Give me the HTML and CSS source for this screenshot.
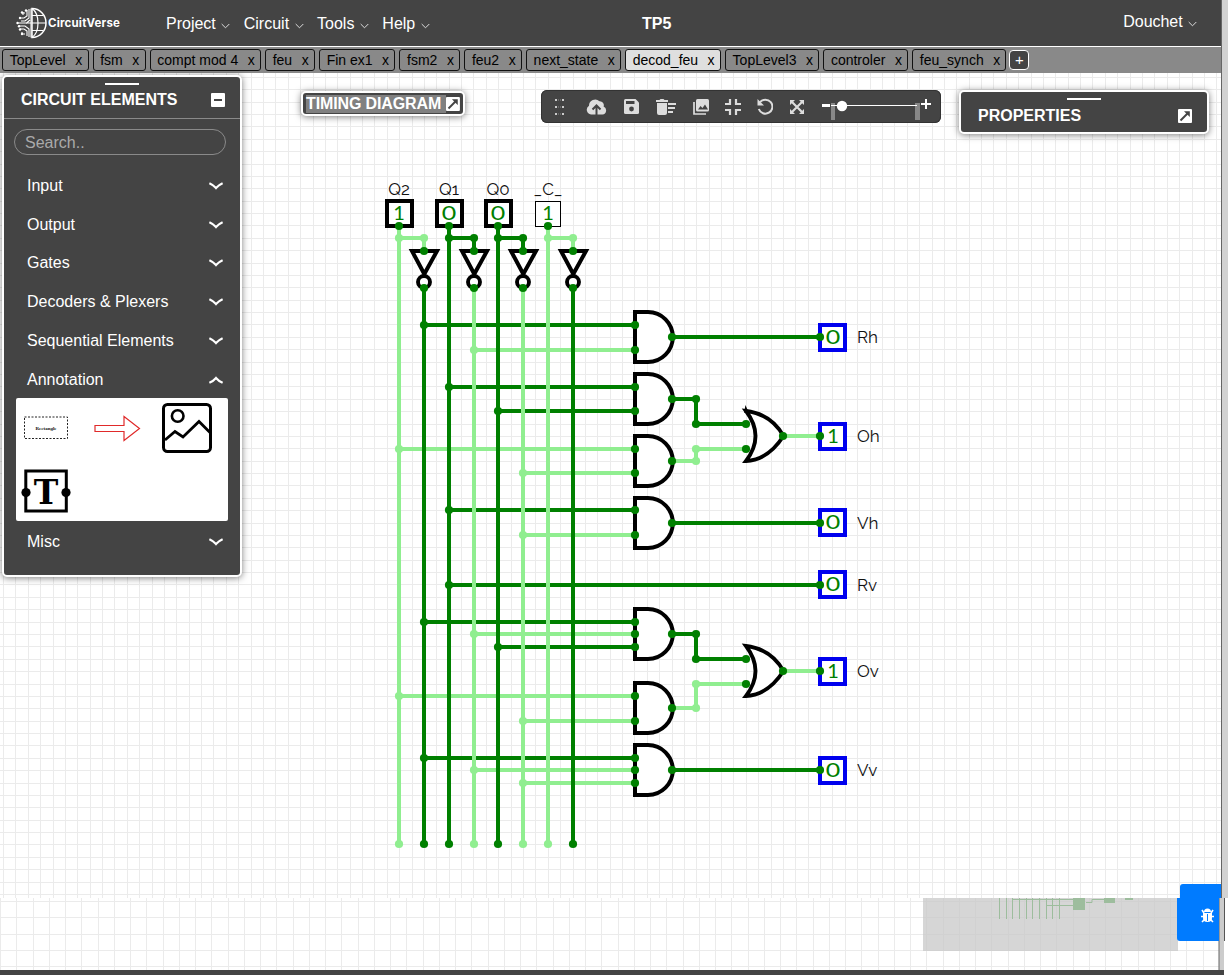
FILE: index.html
```html
<!DOCTYPE html>
<html lang="fr">
<head>
<meta charset="utf-8">
<title>TP5 - CircuitVerse</title>
<link rel="stylesheet" href="styles.css">
</head>
<body>
<svg class="defs" width="0" height="0">
  <symbol id="popout" viewBox="0 0 14 14"><path d="M0 1Q0 0 1 0H13Q14 0 14 1V13Q14 14 13 14H1Q0 14 0 13Z" fill="#fff"/><path d="M2.500 11.500 10 4" stroke="#444" stroke-width="1.900"/><path d="M6 2.200H11.800V8Z" fill="#444"/></symbol>
  <symbol id="chev" viewBox="0 0 9 6"><path d="M.7 1 4.5 4.8 8.3 1" fill="none" stroke="#ddd" stroke-width="1"/></symbol>
  <symbol id="arrow" viewBox="0 0 14 8"><path d="M.4 1.200Q4.500 3 7 6Q9.500 3 13.600 1.200" fill="none" stroke="#fff" stroke-width="2.100"/></symbol>
</svg>

<main class="app">
  <header class="navbar">
    <div class="brand">
      <svg width="32" height="32" viewBox="0 0 32 32" fill="none" stroke="#fff">
        <path d="M16 1.500A14 14.500 0 0 1 16 30.500Z" stroke-width="1.500"/>
        <path d="M16 1.500C24 7 24 25 16 30.500M16 8.500H27M16 16H30M16 23.500H27" stroke-width="1.200"/>
        <path d="M15 1.500V30.500M13 2V11L9 14H5M13 30V22L9 19H3M11 3V9L8 11H4M11 29V24L8 22H4M9 6H6M9 27H6M15 16H1M7 5V8M6 25V28M14 13 10 16.500" stroke-width="1.100"/>
        <g fill="#fff" stroke="none"><circle cx="4" cy="11" r="1.200"/><circle cx="1.500" cy="16" r="1.200"/><circle cx="3" cy="19.300" r="1.200"/><circle cx="4" cy="22.500" r="1.200"/><circle cx="6" cy="27" r="1.200"/><circle cx="6" cy="5.500" r="1.200"/><circle cx="10" cy="3.500" r="1.200"/></g>
      </svg>
      <span>CircuitVerse</span>
    </div>
    <nav class="menu">
      <a>Project <svg width="9" height="6"><use href="#chev"/></svg></a>
      <a>Circuit <svg width="9" height="6"><use href="#chev"/></svg></a>
      <a>Tools <svg width="9" height="6"><use href="#chev"/></svg></a>
      <a>Help <svg width="9" height="6"><use href="#chev"/></svg></a>
    </nav>
    <div class="title">TP5</div>
    <a class="user">Douchet <svg width="9" height="6"><use href="#chev"/></svg></a>
  </header>

  <div class="tabs">
    <div class="tab">TopLevel<span>x</span></div>
    <div class="tab">fsm<span>x</span></div>
    <div class="tab">compt mod 4<span>x</span></div>
    <div class="tab">feu<span>x</span></div>
    <div class="tab">Fin ex1<span>x</span></div>
    <div class="tab">fsm2<span>x</span></div>
    <div class="tab">feu2<span>x</span></div>
    <div class="tab">next_state<span>x</span></div>
    <div class="tab current">decod_feu<span>x</span></div>
    <div class="tab">TopLevel3<span>x</span></div>
    <div class="tab">controler<span>x</span></div>
    <div class="tab">feu_synch<span>x</span></div>
    <button class="add">+</button>
  </div>
</main>

<svg class="board" id="board" width="1228" height="975"></svg>

<section class="panel elements">
  <div class="grip"></div>
  <h2 class="head">CIRCUIT ELEMENTS <svg width="14" height="14"><rect width="14" height="14" rx="1" fill="#fff"/><path d="M3 7H11" stroke="#444" stroke-width="2"/></svg></h2>
  <div class="search">Search..</div>
  <ul class="groups">
    <li>Input <svg width="14" height="8"><use href="#arrow"/></svg></li>
    <li>Output <svg width="14" height="8"><use href="#arrow"/></svg></li>
    <li>Gates <svg width="14" height="8"><use href="#arrow"/></svg></li>
    <li>Decoders &amp; Plexers <svg width="14" height="8"><use href="#arrow"/></svg></li>
    <li>Sequential Elements <svg width="14" height="8"><use href="#arrow"/></svg></li>
    <li class="open">Annotation <svg width="14" height="8"><use href="#arrow"/></svg></li>
  </ul>
  <div class="icons">
    <svg width="212" height="123" viewBox="16 398 212 123" fill="none">
      <rect x="24.500" y="417" width="43" height="21.500" stroke="#222" stroke-dasharray="2 1.500"/>
      <text x="46" y="430" class="tiny" text-anchor="middle">Rectangle</text>
      <path d="M95 425.500H124V416.500L139.500 428.500 124 440.500V431.500H95Z" stroke="#e02a2a" stroke-width="1.200"/>
      <rect x="163.500" y="404.500" width="47" height="47" rx="4" stroke="#000" stroke-width="3"/>
      <circle cx="177.700" cy="416" r="5.800" stroke="#000" stroke-width="2.600"/>
      <path d="M165 440 175 431.500 183 437 199 421.500 211 433.500" stroke="#000" stroke-width="2.800"/>
      <rect x="25.800" y="471" width="40.500" height="40" stroke="#000" stroke-width="3"/>
      <circle cx="26" cy="492.500" r="4.600" fill="#000"/><circle cx="66" cy="492.500" r="4.600" fill="#000"/>
      <text x="46" y="503.500" class="tee" text-anchor="middle">T</text>
    </svg>
  </div>
  <ul class="groups last"><li>Misc <svg width="14" height="8"><use href="#arrow"/></svg></li></ul>
</section>

<section class="panel timing"><span>TIMING DIAGRAM</span><svg width="14" height="14"><use href="#popout"/></svg></section>

<section class="toolbar">
  <svg width="9" height="18" fill="#ccc"><path d="M0 1h2v2H0zM3.500 1h2v2h-2zM7 1h2v2H7zM0 8h2v2H0zM3.500 8h2v2h-2zM7 8h2v2H7zM0 15h2v2H0zM3.500 15h2v2h-2zM7 15h2v2H7z"/><path d="M3.500 0h2v18h-2z" fill="#444"/></svg>
  <svg width="21" height="16" viewBox="0 0 21 16"><path d="M5 15.500A4.800 4.800 0 0 1 3 6.700A6.200 6.200 0 0 1 13.500 2.200A4 4 0 0 1 17.600 7.500A4.200 4.200 0 0 1 16.500 15.500Z" fill="#ddd"/><path d="M10.500 16V8M6.500 10.500 10.500 6.500 14.500 10.500" fill="none" stroke="#444" stroke-width="2"/></svg>
  <svg width="15" height="15" viewBox="0 0 15 15"><path d="M1.500 0H11.500L15 3.500V13.500Q15 15 13.500 15H1.500Q0 15 0 13.500V1.500Q0 0 1.500 0Z" fill="#ddd"/><path d="M2 2H10.500V5H2Z" fill="#444"/><circle cx="7.500" cy="10" r="2.400" fill="#444"/></svg>
  <svg width="20" height="16" viewBox="0 0 20 16" fill="#ddd"><path d="M0 1H3.500L4.500 0H7.500L8.500 1H12V3H0ZM1 4H11V14Q11 16 9 16H3Q1 16 1 14ZM12 4H20V6H12ZM12 8H19V10H12ZM12 12H17V14H12Z"/></svg>
  <svg width="16" height="16" viewBox="0 0 16 16"><path d="M1 3V15H13" fill="none" stroke="#ddd" stroke-width="1.700"/><rect x="3" y="0" width="13" height="12.500" rx="1.500" fill="#ddd"/><path d="M5 10.500 7.500 7 9.500 9 12 5.500 15 10.500Z" fill="#444"/></svg>
  <svg width="16" height="16" viewBox="0 0 16 16"><path d="M0 5H5V0M11 0V5H16M0 11H5V16M16 11H11V16" fill="none" stroke="#ddd" stroke-width="2.200"/></svg>
  <svg width="16" height="17" viewBox="0 0 16 17"><path d="M3 4.200A7 7 0 1 1 1.800 11" fill="none" stroke="#ddd" stroke-width="2"/><path d="M.5 1V7.500H7Z" fill="#ddd"/></svg>
  <svg width="14" height="14" viewBox="0 0 14 14"><path d="M2 2 12 12M12 2 2 12" stroke="#ddd" stroke-width="2.200"/><path d="M0 0H5L0 5ZM14 0V5L9 0ZM0 14V9L5 14ZM14 14H9L14 9Z" fill="#ddd"/></svg>
  <svg class="zoom" width="128" height="33"><path d="M9 15.500H17" stroke="#fff" stroke-width="3"/><path d="M108 14H118M113 9V19" stroke="#fff" stroke-width="2"/><path d="M18 13H22V30H18ZM102 13H107V30H102Z" fill="#888"/><path d="M18 15.500H104" stroke="#fff"/><circle cx="29" cy="16" r="5.200" fill="#fff"/></svg>
</section>

<section class="panel props">
  <div class="grip"></div>
  <h2 class="head">PROPERTIES <svg width="14" height="14"><use href="#popout"/></svg></h2>
</section>

<script src="circuit.js"></script>
</body>
</html>
```
FILE: styles.css
```css
* { box-sizing: border-box; }
body { margin: 0; width: 1228px; height: 975px; overflow: hidden; position: relative; background: #fff; font-family: "Liberation Sans", Arial, sans-serif; font-size: 16px; color: #fff; }
ul, h2 { margin: 0; padding: 0; list-style: none; }
.defs { position: absolute; }
.app { width: 1221px; }
.navbar { height: 47px; display: flex; align-items: center; background: #444; border-bottom: 1px solid #fff; }
.brand { width: 166px; padding-left: 16px; display: flex; align-items: center; }
.brand span { font: 700 11.5px Inter, sans-serif; letter-spacing: .18px; }
.menu { display: flex; gap: 13.5px; width: 476px; padding-top: 2px; }
.menu svg, .user svg { margin-left: 1px; vertical-align: 0; }
.menu a { white-space: nowrap; }
.title { font-weight: 700; flex: 1; padding-top: 2px; }
.user { margin: -2px 24px 0 0; letter-spacing: -.05px; }
.tabs { height: 26px; display: flex; gap: 4px; padding: 2px 0 0 2px; background: #898989; color: #000; font-size: 14px; }
.tab { height: 22px; display: flex; align-items: center; border: 1px solid #111; border-radius: 3px; padding: 0 5.3px 0 6.7px; white-space: nowrap; flex: none; }
.tab span { margin-left: 9.5px; }
.tab.current { background: #dfdfdf; }
.add { margin: 1px 0 0 -1px; width: 20px; height: 20px; padding: 0; border: 1px solid #fff; border-radius: 4px; background: #444; color: #fff; font: 15px/16px "Liberation Sans", sans-serif; }

.board { position: absolute; left: 0; top: 0; z-index: -1; }
.board .lbl { font: 17px Raleway, Lato, sans-serif; fill: #111; }
.board .digit { font: 20px Lato, sans-serif; fill: green; }

.panel { position: absolute; background: #444; border: 2px solid #fff; border-radius: 5px; box-shadow: 0 1px 7px rgba(0,0,0,.5); }
.grip { width: 34px; height: 2px; margin: 0 auto; background: #fff; }
.head { display: flex; align-items: center; justify-content: space-between; font-size: 16px; line-height: 20px; }
.elements { left: 2px; top: 75px; width: 240px; height: 502px; padding-top: 6px; }
.elements .head { height: 34px; padding: 0 15px 3px 17px; border-bottom: 1px solid #8a8a8a; }
.search { height: 26px; margin: 10px 14px 0 10px; padding: 0 10px; border: 1px solid #8a8a8a; border-radius: 13px; line-height: 25px; color: #aaa; }
.groups { padding: 11.5px 17.500px 0 23px; }
.groups li { height: 38.8px; display: flex; align-items: center; justify-content: space-between; }
.open svg { transform: rotate(180deg); }
.icons { height: 123px; margin: -1.3px 12px 0; background: #fff; border-radius: 2px; }
.icons svg { display: block; }
.tiny { font: 700 5px "Liberation Serif", serif; fill: #111; }
.tee { font: 700 33px "DejaVu Serif", serif; fill: #000; }
.groups.last { padding-top: 2px; }
.timing { left: 301px; top: 91px; width: 164px; height: 25px; display: flex; align-items: center; padding: 0 3px; font-weight: 700; }
.timing span { background: #808080; width: 141px; height: 18px; line-height: 18px; white-space: nowrap; letter-spacing: -.12px; }
.toolbar { position: absolute; left: 541px; top: 90px; width: 400px; height: 33px; display: grid; grid-template-columns: 36px 38px 33px 36px 33px 32px 32px 32px 128px; place-items: center; background: #444; border: 0; border-radius: 6px; box-shadow: inset 0 0 0 1px #333; }
.props { left: 959px; top: 90px; width: 250px; height: 44px; padding-top: 6px; }
.props .head { padding: 2px 15px 0 17px; height: 30px; }
```
FILE: circuit.js
```javascript
const D = 'green', L = 'lightgreen';
let out = '';
const path = (d, attrs) => { out += `<path d="${d}" ${attrs}/>`; };
const rect = (x, y, w, h, attrs) => { out += `<rect x="${x}" y="${y}" width="${w}" height="${h}" ${attrs}/>`; };
const node = (x, y, c = D) => { out += `<circle cx="${x}" cy="${y}" r="4.1" fill="${c}"/>`; };
const wire = (d, c) => path(d, `fill="none" stroke="${c}" stroke-width="4"`);
const text = (x, y, t, cls, anchor = 'middle', extra = '') => { out += `<text x="${x}" y="${y}" class="${cls}" text-anchor="${anchor}" ${extra}>${t}</text>`; };
const digit = (x, y, v) => text(x, y + 7, v, 'digit', 'middle', v ? '' : 'textLength="14.5" lengthAdjust="spacingAndGlyphs"');

// upper and lower grids
let g = '';
for (let x = 3.04; x < 1220; x += 12.38) g += `M${Math.round(x) + .5} 73V898`;
for (let y = 76.9; y < 898; y += 12.38) g += `M0 ${Math.round(y) + .5}H1221`;
for (let x = 0; x < 1219; x += 16.25) g += `M${Math.round(x) + .5} 898V970`;
for (let y = 901; y < 970; y += 16.25) g += `M0 ${Math.round(y) + .5}H1219`;
path(g, 'stroke="#ebebeb" fill="none"');

// window edges
rect(1221, 0, 7, 898, 'fill="#d2d2d2"');
rect(1221, 0, 1, 898, 'fill="#666"');
rect(1219, 898, 5, 72, 'fill="#ccc"');
rect(1218.5, 898, 1, 77, 'fill="#666"');
rect(1224, 898, 1, 43, 'fill="#555"');
rect(0, 970, 1224, 5, 'fill="#444"');

// minimap
rect(923, 898, 255, 53, 'fill="#c8c8c8" fill-opacity=".75"');
path('M999.5 898V919M1006.500 898V919M1012.500 898V919M1019.500 898V919M1026.500 898V919M1032.500 898V919M1039.500 898V919M1046.500 898V919M1052.500 898V919M1059.500 898V919M1012 899.500H1074M1046 905.500H1074M1086 902.500H1092V899.500H1104', 'fill="none" stroke="#9dbd9d"');
path('M1073 898H1085V910H1073ZM1104 898H1115V903H1104ZM1125 898H1133V900H1125Z', 'fill="#9dbd9d"');

// bug report button
path('M1180 898V887Q1180 884 1183 884H1221V898H1219V941H1180Q1177 941 1177 938V898Z', 'fill="#007bff"');
path('M1204 912Q1204 908.500 1207.500 908.500Q1211 908.500 1211 912ZM1203 913H1212V918Q1212 922 1207.500 922Q1203 922 1203 918Z', 'fill="#fff"');
path('M1202 910 1204 913M1213 910 1211 913M1201 916.500H1214M1202 922 1204.500 919.500M1213 922 1210.500 919.500', 'stroke="#fff" stroke-width="1.600"');
path('M1207.500 914V921', 'stroke="#007bff"');

// horizontal wires into the AND gates
const taps = [[325,424,D],[350,474,L],[387,449,D],[411,498,D],[449,399,L],[473,523,L],[510,449,D],[535,523,L],
  [622,424,D],[634,474,L],[647,498,D],[696,399,L],[721,523,L],[758,424,D],[770,474,L],[783,523,L]];
taps.forEach(([y, x, c]) => wire(`M${x} ${y}H635`, c));
wire('M449 585H820', D);

// vertical rails
[[399,226,L],[424,288,D],[449,226,D],[474,288,L],[498,226,D],[523,288,L],[548,226,L],[573,288,D]]
  .forEach(([x, y, c]) => { wire(`M${x} ${y}V844`, c); node(x, 844, c); });
taps.forEach(([y, x, c]) => node(x, y, c));
node(449, 585);

// inputs with their inverters
[['Q2',399,424,1],['Q1',449,474,0],['Q0',498,523,0],['_C_',548,573,1]].forEach(([name, x, nx, v]) => {
  const c = v ? L : D;
  wire(`M${x} 238H${nx}V251`, c);
  node(x, 238, c); node(nx, 238, c);
  if (name === '_C_') rect(535.5, 201.5, 25, 25, 'fill="#fff" stroke="#000"');
  else rect(x - 12, 201, 25, 25, 'fill="#fff" stroke="#000" stroke-width="4"');
  text(x, 195, name, 'lbl');
  digit(x, 213, v);
  node(x, 226);
  path(`M${nx - 12} 251H${nx + 13}L${nx + .3} 274Z`, 'fill="#fff" stroke="#000" stroke-width="4"');
  out += `<circle cx="${nx}" cy="282" r="6" fill="#fff" stroke="#000" stroke-width="3.900"/>`;
  node(nx, 251); node(nx, 288);
});

// gate outputs
[337, 523, 770].forEach(y => wire(`M673 ${y}H820`, D));
wire('M673 399H696V424H746', D); node(696, 399); node(696, 424);
wire('M673 461H696V449H746', L); node(696, 461, L); node(696, 449, L);
wire('M673 634H696V659H746', D); node(696, 634); node(696, 659);
wire('M673 708H696V684H746', L); node(696, 708, L); node(696, 684, L);
[436, 671].forEach(y => {
  wire(`M784 ${y}H820`, L);
  path(`M746 ${y - 25}Q771 ${y - 22} 783.500 ${y}Q768 ${y + 24} 746 ${y + 25}Q765 ${y} 746 ${y - 25}Z`, 'fill="#fff" stroke="#000" stroke-width="3.800"');
  node(746, y - 12); node(746, y + 13); node(783, y);
});
path('M744 413 745.500 405 748 411Z', 'fill="#000"');
[337, 399, 461, 523, 634, 708, 770].forEach(y => {
  path(`M635 ${y - 25}H648A24.800 25 0 0 1 648 ${y + 25}H635Z`, 'fill="#fff" stroke="#000" stroke-width="4"');
  node(672, y);
});
taps.forEach(([y]) => node(635, y));

// output pins
[['Rh',337,337,0],['Oh',436,436,1],['Vh',522,523,0],['Rv',584,585,0],['Ov',671,671,1],['Vv',770,770,0]].forEach(([name, y, wy, v]) => {
  rect(820, y - 12, 25, 25, 'fill="#fff" stroke="#00e" stroke-width="4"');
  digit(833, y - .5, v);
  node(820, wy);
  text(857, wy + 6, name, 'lbl', 'start');
});

document.getElementById('board').innerHTML = out;
```
